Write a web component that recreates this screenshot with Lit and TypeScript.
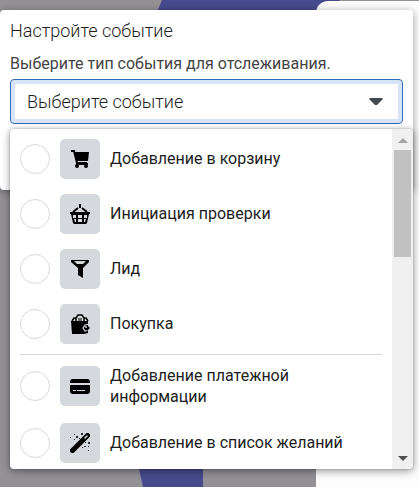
import { LitElement, html, css, svg } from "lit";
import { customElement, state } from "lit/decorators.js";

const icons = {
  cart: svg`<path d="M1 2h3l3 12h10" fill="none" stroke="currentColor" stroke-width="2"/><path d="M4 3h15l-1 9H6z"/><path d="M6 15h12" stroke="currentColor" stroke-width="2"/><circle cx="7" cy="17" r="2"/><circle cx="16" cy="17" r="2"/>`,
  basket: svg`<path d="M10 0v4M8 4L3 8M12 4l5 4" fill="none" stroke="currentColor" stroke-width="2"/><path fill-rule="evenodd" d="M0 8h20v2h-1l-2 9-1 1H4l-1-1-2-9H0zM3 11v3h3v-3zM8 11v3h4v-3zM14 11v3h3v-3zM4 15l1 3h1v-3zM8 15v3h4v-3zM14 15v3h1l1-3z"/>`,
  funnel: svg`<path fill-rule="evenodd" d="M1 1h18v2l-6 6v10l-5-3V9L1 3zM4 2l3 3h6l3-3z"/>`,
  bag: svg`<path d="M6 7V4l2-3h4l2 3v3M2 7l2-3h2M14 4h2l2 3" fill="none" stroke="currentColor" stroke-width="1.5"/><path d="M9 4v3M11 4v3" stroke="currentColor"/><path d="M1 7h17v12l-4 1H2z"/><path d="M20 10l-5 1-2 3 2 3 5-1" fill="none" stroke="#d5d8dd" stroke-width="1.2"/><path d="M17 11l3 3-3 3-2-3z"/><circle cx="16" cy="13" r="1" fill="#d5d8dd"/>`,
  card: svg`<path d="M0 6c0-2 1-3 3-3h14c2 0 3 1 3 3v1H0zM0 9h20v6c0 2-1 3-3 3H3c-2 0-3-1-3-3z"/><path d="M3 14.500h3M7 14.500h8" stroke="#d5d8dd" stroke-width="1"/>`,
  wand: svg`<path d="M2.500 17.500L17.500 2.500" stroke="currentColor" stroke-width="5" stroke-linecap="round"/><path d="M15 5l2-2" stroke="#d5d8dd" stroke-width="1.500" stroke-linecap="round"/><path d="M0 4h1v1H0zM4 1h1v1H4zM6 3h2v2H6zM11 0h2v2h-2zM4 6h1v1H4zM9 5h1v1H9zM18 9h2v2h-2zM15 9h1v1h-1zM14 13h2v1h-2zM18 13h1v1h-1zM18 17h1v1h-1zM12 14h1v1h-1z" opacity="0.8"/>`,
};

const groups: { icon: keyof typeof icons; label: string }[][] = [
  [
    { icon: "cart", label: "Добавление в корзину" },
    { icon: "basket", label: "Инициация проверки" },
    { icon: "funnel", label: "Лид" },
    { icon: "bag", label: "Покупка" },
  ],
  [
    { icon: "card", label: "Добавление платежной информации" },
    { icon: "wand", label: "Добавление в список желаний" },
  ],
];

@customElement("app-root")
export class AppRoot extends LitElement {
  @state() private open = true;

  static styles = css`
    :host {
      display: block;
      position: relative;
      min-height: 100vh;
      overflow: hidden;
      box-sizing: border-box;
      padding-top: 10px;
      background: #939196;
      font-family: Roboto, sans-serif;
      font-size: 16px;
      line-height: 21px;
      color: #1c1e21;
    }
    .backdrop {
      position: absolute;
      inset: 0;
      width: 100%;
      height: 100%;
    }
    .side {
      position: absolute;
      top: 1px;
      right: 0;
      bottom: 0;
      width: 103px;
      border-top-left-radius: 12px;
      background: #fcfcfc;
    }
    .dialog {
      position: relative;
      box-sizing: border-box;
      height: 180px;
      margin-right: 6px;
      padding: 10px;
      border-radius: 4px;
      background: #fff;
      box-shadow: 0 2px 8px rgba(0, 0, 0, 0.4);
    }
    h1 {
      margin: 0 0 12px;
      font-size: 18px;
      line-height: 21px;
      font-weight: 300;
    }
    p {
      margin: 0 0 5px;
      color: #444;
    }
    .select {
      display: flex;
      align-items: center;
      justify-content: space-between;
      width: 100%;
      height: 45px;
      padding: 0 19px 0 16px;
      border: 1px solid #3569b9;
      border-radius: 4px;
      background: #fff;
      box-shadow: inset 0 0 0 4px #d7e4f8;
      font: inherit;
      font-size: 18px;
      font-weight: 300;
      color: inherit;
    }
    .menu {
      position: absolute;
      top: 119px;
      left: 10px;
      right: 0;
      display: flex;
      height: 340px;
      border-radius: 4px;
      overflow: hidden;
      background: #fff;
      box-shadow: 0 0 2px rgba(0, 0, 0, 0.3), 0 2px 8px rgba(0, 0, 0, 0.4);
    }
    .list {
      flex: 1;
      min-width: 0;
      padding: 2px 10px 0;
    }
    .group + .group {
      border-top: 1px solid #d5d8dd;
      margin-top: 3px;
      padding-top: 2px;
    }
    .option {
      display: flex;
      align-items: center;
      gap: 10px;
      min-height: 55px;
    }
    .group + .group .option {
      min-height: 57px;
    }
    input {
      appearance: none;
      flex: none;
      width: 30px;
      height: 30px;
      margin: 0;
      border: 1px solid #d5dadd;
      border-radius: 50%;
      background: #fff;
    }
    input:checked {
      border: 9px solid #3569b9;
    }
    .tile {
      display: grid;
      place-items: center;
      flex: none;
      width: 40px;
      height: 40px;
      border-radius: 5px;
      background: #d5d8dd;
      color: #000;
    }
    .label {
      max-width: 240px;
    }
    .scrollbar {
      display: flex;
      flex-direction: column;
      align-items: center;
      width: 21px;
      padding: 9px 0 8px;
      box-sizing: border-box;
      background: #f0f0f0;
    }
    .thumb {
      width: 17px;
      height: 107px;
      margin: 7px 0 auto;
      background: #c1c1c1;
    }
  `;

  render() {
    return html`
      <svg class="backdrop" viewBox="0 0 419 487" preserveAspectRatio="none" aria-hidden="true">
        <path d="M162 0H340L203 200V487H143L80 200z" fill="#474a8c" />
      </svg>
      <div class="side"></div>
      <section class="dialog">
        <h1>Настройте событие</h1>
        <p>Выберите тип события для отслеживания.</p>
        <button class="select" aria-expanded=${this.open} @click=${() => (this.open = !this.open)}>
          Выберите событие
          <svg width="14" height="8" viewBox="0 0 14 8" fill="#444950"><path d="M1 0h12l1 1-6 6H6L0 1z" /></svg>
        </button>
        ${this.open
          ? html`<div class="menu">
              <div class="list">
                ${groups.map(
                  (group) => html`<div class="group">
                    ${group.map(
                      (item) => html`<label class="option">
                        <input type="radio" name="event" />
                        <span class="tile"><svg width="20" height="20" viewBox="0 0 20 20" fill="currentColor">${icons[item.icon]}</svg></span>
                        <span class="label">${item.label}</span>
                      </label>`
                    )}
                  </div>`
                )}
              </div>
              <div class="scrollbar" aria-hidden="true">
                <svg width="10" height="5" viewBox="0 0 10 5" fill="#a3a3a3"><path d="M5 0l5 5H0z" /></svg>
                <div class="thumb"></div>
                <svg width="10" height="5" viewBox="0 0 10 5" fill="#505050"><path d="M0 0h10L5 5z" /></svg>
              </div>
            </div>`
          : ""}
      </section>
    `;
  }
}
